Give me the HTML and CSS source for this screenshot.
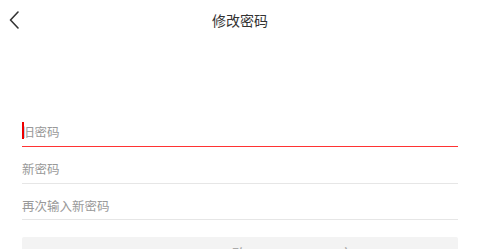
FILE: index.html
```html
<!DOCTYPE html>
<html lang="zh-CN">
<head>
  <meta charset="UTF-8" />
  <meta name="viewport" content="width=device-width, initial-scale=1.0"/>
  <title>修改密码</title>
  <link rel="stylesheet" href="styles.css">
</head>
<body>

<header class="topbar">
  <a class="back" href="#">
    <svg width="10" height="18" viewBox="0 0 10 18">
      <polyline points="9,1 1.5,9 9,17" fill="none" stroke="#333" stroke-width="1.6" stroke-linejoin="round" stroke-linecap="round"/>
    </svg>
  </a>
  <h1>修改密码</h1>
</header>

<form class="pwd-form">
  <div class="field active">
    <input type="password" placeholder="旧密码">
  </div>
  <div class="field">
    <input type="password" placeholder="新密码">
  </div>
  <div class="field">
    <input type="password" placeholder="再次输入新密码">
  </div>
  <button type="button" class="submit">确定</button>
</form>

</body>
</html>
```

FILE: styles.css
```css
body {
  font-family: "Noto Sans CJK SC", "Noto Sans", sans-serif;
  background: #fff;
  margin: 0;
  padding: 0;
  overflow: hidden;
}
.topbar {
  height: 40px;
  display: flex;
  align-items: center;
  justify-content: center;
  position: relative;
}
.topbar h1 {
  margin: 0;
  font-size: 14px;
  font-weight: normal;
  color: #333;
}
.back {
  position: absolute;
  left: 9px;
  top: 11px;
  display: block;
  line-height: 0;
}
.pwd-form {
  margin: 70px 22px 0;
}
.field {
  height: 36px;
  border-bottom: 1px solid #e6e6e6;
  position: relative;
}
.field:last-of-type {
  height: 35px;
}
.field.active {
  border-bottom-color: #f33;
}
.field.active::before {
  content: "";
  position: absolute;
  left: 0;
  top: 12px;
  width: 2px;
  height: 17px;
  background: #e00;
}
.field input {
  display: block;
  width: 100%;
  height: 36px;
  box-sizing: border-box;
  padding: 6px 0 0;
  border: none;
  outline: none;
  font-family: inherit;
  font-size: 12.5px;
  color: #333;
  background: transparent;
}
.field input::placeholder {
  color: #999;
}
.submit {
  display: block;
  width: 100%;
  height: 40px;
  margin-top: 17px;
  padding: 0 0 6px;
  border: none;
  border-radius: 2px;
  background: #f3f3f3;
  color: #aaa;
  font-family: inherit;
  font-size: 16px;
  letter-spacing: 90px;
  text-indent: 196px;
}
```
